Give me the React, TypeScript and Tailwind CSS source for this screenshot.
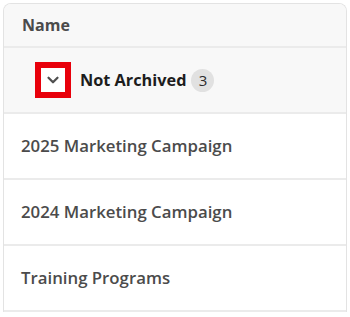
import { ChevronDown } from 'lucide-react'

const rows = ['2025 Marketing Campaign', '2024 Marketing Campaign', 'Training Programs']

export default function App() {
  return (
    <div className="h-[317px] w-[350px] bg-white pl-[3px] pt-[3px] font-['Open_Sans',sans-serif]">
      <div className="w-[344px] overflow-hidden rounded-t-lg border border-b-0 border-[#e3e3e3]">
        <div className="flex h-[44px] items-center border-b-2 border-[#ebebeb] bg-[#f8f8f8] pl-[18px] text-[16px] font-bold text-[#4b4b4b]">
          Name
        </div>
        <div className="flex h-[66px] items-center border-b-2 border-[#ebebeb] bg-[#f8f8f8] pl-[31px]">
          <div className="flex h-[36px] w-[36px] items-center justify-center border-[6px] border-[#e8000b] bg-white">
            <ChevronDown className="h-[18px] w-[18px] text-[#505050]" strokeWidth={3} />
          </div>
          <span className="ml-[9px] text-[16.3px] font-bold text-[#1d1d1d]">Not Archived</span>
          <span className="ml-[5px] flex h-[23px] w-[23px] items-center justify-center rounded-full bg-[#e1e1e1] text-[15px] font-medium text-[#2c2c2c]">
            3
          </span>
        </div>
        {rows.map((r) => (
          <div
            key={r}
            className="flex h-[66px] items-center border-b-2 border-[#ebebeb] bg-white pl-[17px] text-[16.8px] font-semibold text-[#4b4b4b]"
          >
            {r}
          </div>
        ))}
      </div>
    </div>
  )
}
